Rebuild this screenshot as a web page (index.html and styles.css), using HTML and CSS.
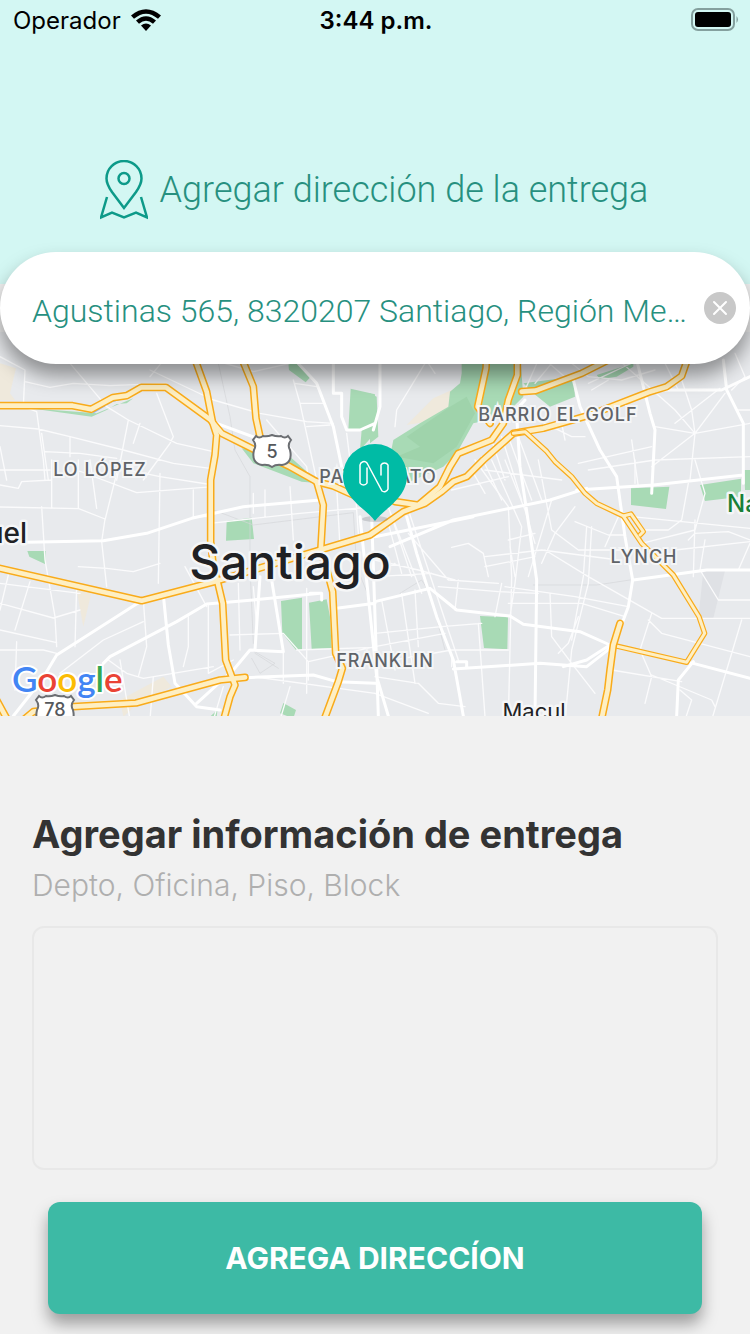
FILE: index.html
```html
<!DOCTYPE html>
<html lang="es">
<head>
<meta charset="utf-8">
<meta name="viewport" content="width=device-width, initial-scale=1">
<title>Agregar dirección</title>
<link rel="stylesheet" href="styles.css">
</head>
<body>
<header class="header">
  <div class="status">
    <div class="carrier">
      <span>Operador</span>
      <svg class="wifi" viewBox="0 0 30 22" aria-hidden="true">
        <path d="M0 6.500Q15-6.200 30 6.500L27 9.800Q15-.5 3 9.800Z"/>
        <path d="M5 11.500Q15 3 25 11.500L22 14.700Q15 9 8 14.700Z"/>
        <path d="M10 16.500Q15 12.500 20 16.500L15 22Z"/>
      </svg>
    </div>
    <time class="clock">3:44 p.m.</time>
    <svg class="battery" viewBox="0 0 48 24" aria-hidden="true">
      <rect x="1" y="1" width="42" height="21" rx="6" fill="none" stroke="#84a09e" stroke-width="2"/>
      <rect x="4" y="4" width="36" height="15" rx="3"/>
      <path d="M45.500 8q3 3.500 0 7z" fill="#84a09e"/>
    </svg>
  </div>
  <div class="title">
    <svg class="title-icon" viewBox="0 0 48 60" aria-hidden="true">
      <path d="M24 48L12 32C8.500 27 6.500 23 6.500 18.500a17.500 17.500 0 0 1 35 0C41.500 23 39.500 27 36 32Z"/>
      <circle cx="24" cy="18.500" r="5.500"/>
      <path d="M7 37L1 57.500L12 52.700L24 57.500L36 52.700L47 57.500L41 37"/>
    </svg>
    <h1>Agregar dirección de la entrega</h1>
  </div>
</header>
<main>
  <form class="search" role="search">
    <input class="search-input" type="text" aria-label="Dirección" value="Agustinas 565, 8320207 Santiago, Región Metropolitana, Chile">
    <button class="clear" type="button" aria-label="Borrar">
      <svg viewBox="0 0 32 32" aria-hidden="true"><path d="M10 10L22 22M22 10L10 22"/></svg>
    </button>
  </form>
  <section class="map" aria-label="Mapa de Santiago">
    <svg class="map-canvas" viewBox="0 332 750 384" preserveAspectRatio="xMidYMid slice">
      <defs>
        <g id="highways">
          <g transform="translate(0 720)">
            <path d="M-10 497L218 497L273 508L338 473L380 467L424 442L498 442L630 538L665 580L765 630L870 680L950 725L1000 738L1060 765"/>
            <path d="M575 330L620 455L638 548L650 585L645 645L632 720L632 905L640 980L655 1035L668 1090L677 1260L705 1335L690 1370L668 1450"/>
            <path d="M715 330L760 440L768 535L780 590L785 630"/>
            <path d="M950 725L970 795L962 935L975 970L998 1055L1007 1240L1027 1285L1015 1325L972 1440"/>
          </g>
          <g transform="translate(0 1380)">
            <path d="M-10 323L425 422L640 366L1110 225L1210 155L1275 130L1325 95L1360 65L1400 50L1450 0L1540 -80L1630 -95L1770 -135L1945 -203L2000 -220L2045 -252L2065 -310"/>
            <path d="M-10 720L20 775M70 780L100 755L220 740L408 729L660 660L735 652"/>
          </g>
          <g transform="translate(1125 720)">
            <path d="M335 340L333 385L308 500L345 550"/>
            <path d="M427 350L427 405L400 480L385 550L350 600L250 640L225 680L195 740L130 795L60 785"/>
            <path d="M440 455L482 452L620 400L720 350"/>
          </g>
        </g>
        <g id="arterials" transform="translate(1125 720)">
          <path d="M415 580L450 575L515 634L540 665L590 710L630 760L665 790L745 828L800 910L895 1005L972 1130L989 1180L935 1267L720 1217"/>
          <path d="M745 828L768 822L805 875L795 885"/>
        </g>
        <path id="avenue" transform="translate(1125 1380)" d="M735 490L715 555L705 630L698 690L675 800"/>
      </defs>
      <rect y="332" width="750" height="384" fill="#e8eaed"/>
      <g transform="scale(.3333333)">
        <g fill="#efe9dc">
          <path d="M0 1090L48 1105L30 1180L45 1200L0 1200ZM230 1770L276 1770L250 1880ZM360 2100L490 2030L515 2060L420 2105L370 2150Z"/>
          <path d="M1380 1085L1400 1070L1395 1120ZM1220 1275L1300 1195L1400 1150L1345 1240L1280 1265Z"/>
        </g>
        <g fill="#a8dab5">
          <path d="M865 1090L900 1090L932 1130L917 1147L867 1110ZM1052 1166L1125 1183V1300L1080 1350L1085 1290H1045ZM725 1345L800 1360L870 1370L960 1450L905 1445L760 1390Z"/>
          <path d="M1385 1060V1120L1380 1150L1350 1175L1345 1220L1260 1270L1180 1320L1170 1370L1220 1450L1330 1400L1370 1360L1420 1270L1510 1250L1570 1190L1560 1060ZM1570 1150L1720 1130L1725 1190L1650 1220L1600 1180ZM1790 1125L1900 1090V1100L1850 1130L1800 1137ZM1110 1180L1130 1190L1135 1310L1110 1330Z"/>
          <path d="M680 1563L755 1553L762 1617L678 1622ZM82 1653H137L135 1692L88 1670ZM843 1803L906 1793V1950H888L847 1900ZM927 1808L980 1798L990 1850L995 1945L935 1947ZM850 2109L888 2130L880 2155L840 2140ZM630 2150L652 2130L650 2160ZM90 1225L290 1240L400 1195L380 1210L350 1212L320 1230L275 1250Z"/>
          <path d="M1893 1465L2008 1460L1998 1527L1893 1515ZM2100 1455L2223 1436V1490L2115 1503ZM1440 1848L1524 1852L1522 1948L1452 1944ZM2233 1410H2250V1470H2235Z"/>
        </g>
        <g fill="#9fd3ab">
          <path d="M1350 1220L1400 1190L1425 1240L1370 1340L1300 1390L1190 1370L1260 1340L1220 1310Z"/>
        </g>
        <path d="M280 1238L335 1205L395 1188" fill="none" stroke="#8ab4f8" stroke-width="4"/>
        <path d="M2110 1712H2175L2140 1855H2095Z" fill="#dfe1e5"/>
        <g class="rail">
          <path d="M655 1090L690 1250L705 1350L750 1430V1700L760 1930M640 1530L760 1575L1060 1538L1070 1700L1110 1800M1200 1780L1265 1740L1290 1780L1335 1950M1600 1755H1790L1890 1740"/>
          <path d="M755 1950L825 1990L780 2020L755 1975M765 1960L835 2005"/>
        </g>
        <g class="minor">
          <g transform="translate(0 720)">
            <path d="M0 350L75 390L70 500L110 515L130 660L135 720M75 425L150 442L220 430L330 437L500 430M210 370L320 500L385 540L530 610L640 635M450 390L640 480L780 520L920 545L1000 550M470 460L520 590L510 610L430 720M0 557L115 567L210 590L370 630L520 670L630 685M385 540L350 720M420 550L400 610M125 580L145 720M210 590V650M135 635L240 640L350 655M0 620L20 720M0 690H150M500 350L450 410M880 420L900 490L950 720M900 490H970M920 560L990 555M885 430L950 440M640 360L760 395L870 370"/>
            <path d="M800 540L920 680L925 720M760 760V820M795 750V830M630 850L900 820L1125 800M870 740L880 900M1010 740L1020 920M580 750L580 830H640M1065 740L1075 880M1040 580L1060 740"/>
          </g>
          <g transform="translate(0 1380)">
            <path d="M0 75L55 85L65 65L155 60M0 141L236 146L315 177L305 245L320 380M155 0V145M235 0V145M125 140L135 300L165 470L170 560M360 0L315 180M230 30L410 98L640 80M360 25L480 50L640 75M480 40L475 370M235 320L320 325L400 335L480 310M230 375L225 560M0 430L160 474L240 450M25 345L0 450M90 365L45 510M0 370L240 400M0 510L170 548M50 545L45 690M0 570H130L170 580M430 420L440 560L415 650M430 485L310 540L180 640M565 470V560L550 620M625 435V640L700 600M325 600L380 640L430 655L640 620M690 525L850 520L925 605L1125 560M715 370L720 570M760 380L770 500M920 385V700M850 570V670M890 570L1125 562M760 650L1125 700M925 605V660M670 680L640 780M870 680L840 780M460 650L450 780M360 600L390 780M270 0L290 145M555 320L620 440"/>
          </g>
          <g transform="translate(1125 720)">
            <path d="M150 370L65 510L60 560M140 340L180 400M490 360L450 450M530 370L480 430M590 370L640 410L740 420L840 390M790 360L640 430M720 350L900 510L960 580M920 420L950 510L960 580L945 720M1050 460L960 580L830 680M960 580L840 560M960 580L1125 550M1035 445L900 550M560 550L570 600M470 530L590 590L630 590M610 670L830 620M640 690L840 660L1125 650M770 600L790 740M1080 340L1110 410L1070 450M1125 510H1085M860 350L910 450M380 590L440 780M400 590L470 780M430 590L500 780M350 600L390 720M320 650L380 780M290 690L330 760M230 750L400 710M500 350L580 420M650 450L700 420"/>
          </g>
          <g transform="translate(1125 1380)">
            <path d="M330 30L560 60M300 0L400 140L410 350L400 780M350 0L440 200L420 370L405 470M390 0L450 150L480 250M490 0L530 210L610 270H740M530 120L460 350M600 140L540 220L500 310M600 185L700 225H750M635 200L625 350L590 540M650 200L640 370L590 570L570 780M330 290L500 270L730 300M330 320L480 290M230 262L280 250L325 280L340 350M480 220L400 240M510 270L640 350L860 475H1125M390 380L600 410L760 440M400 430H620L750 470M525 400L530 530L590 610L660 700M610 470L580 550L550 580M830 460L795 570L830 650L810 730M820 480L860 520L1125 590M1100 480L1010 780M710 630L920 665M830 645L1010 720L1020 740M915 690L950 720L930 780M990 240L975 330L1030 420H1125M1125 240L1060 215L960 220L940 240M960 180L955 350M770 170L1125 205M940 70L920 180L880 210H810M960 0L990 100L960 210L800 250M900 270L1125 245M1125 250L1090 330M780 0V70M100 220L220 360L370 370M0 300L130 330L240 360M0 350L170 340M190 380L370 395L490 400M0 520L200 500L320 490M20 420L60 630M80 400L120 670M120 390L130 560M0 560L210 520M0 610L230 570L400 570M230 590V620M0 650L130 670L190 730L270 740M0 700L160 760M310 490L330 770M0 20L110 350M20 90L140 400M100 150L250 600M40 190L80 340M60 310L0 340M250 360L240 450M380 370L360 470M730 170L690 260M405 260L420 350"/>
          </g>
        </g>
        <g class="major">
          <path d="M1000 1090V1180H1025V1250L1040 1290H1080L1125 1270M885 1080L950 1150L1000 1280L1025 1400M650 1270L780 1318M1140 1080V1220L1120 1290"/>
          <path d="M80 1627L310 1622L440 1600L575 1555L730 1520L960 1500M420 1805L170 1965L125 2040L40 2148M310 1990L330 1970L530 1865L620 1812L780 1798L960 1780M490 1785L505 1935L525 2050L590 2120L660 2130M780 1730L765 1950M815 1740L850 1955L750 1950L700 2010L590 2110M930 1780H965V1800M740 2033L940 2025L1010 2045L1125 2050M1010 1825L1125 1810M1080 1550L1130 2030L1165 2148M1115 1550L1135 2148"/>
          <path d="M1575 1200L1530 1250M1720 1140L1740 1220L1800 1350L1850 1430L1875 1610L1898 1740L1885 1820L1855 1900M1940 1170H2165L2250 1130M1910 1080L1950 1240L1965 1290L1955 1480M2170 1080L2180 1170L2190 1190L2230 1270V1450M1730 1470L1960 1455L2230 1425"/>
          <path d="M1550 1250L1560 1400L1590 1600L1610 1740L1605 2148M1170 1640L1360 1560L1650 1500L1760 1465M1125 1610L1420 1550M1125 1805L1290 1765L1370 1830L1530 1848L1570 1873L1740 1895L1830 1935M1220 1550L1250 1660L1310 1850L1360 1980L1390 2148M1360 2007L1620 1990L1760 2000L1830 1945M1370 1985H1400V2005M1830 1935L1760 1980L1690 2000M2080 1985L2035 2040L2030 2148M2060 1985L2250 2035M1900 1740L2120 1710H2250"/>
        </g>
        <use href="#highways" class="road-edge"/>
        <use href="#highways" class="road-fill"/>
        <use href="#arterials" class="arterial-edge"/>
        <use href="#arterials" class="arterial-fill"/>
        <use href="#avenue" class="road-edge"/>
        <use href="#avenue" class="road-fill"/>
      </g>
      <g class="shields">
        <path d="M256 436q3 3 7 0q4 1 9-1q5 2 9 1q4 3 7 0l3 4q-4 5-1 10q3 13-8 15q-6-1-10 2q-4-3-10-2q-11-2-8-15q3-5-1-10Z"/>
        <text x="272" y="458">5</text>
        <path d="M39 696q3 3 7 0q4 1 9-1q5 2 9 1q4 3 7 0l3 4q-4 5-1 10q3 13-8 15q-6-1-10 2q-4-3-10-2q-11-2-8-15q3-5-1-10Z"/>
        <text x="55" y="716">78</text>
      </g>
      <g class="area-labels">
        <text x="100" y="476">LO LÓPEZ</text>
        <text x="558" y="421">BARRIO EL GOLF</text>
        <text x="378" y="483">PATRONATO</text>
        <text x="644" y="563">LYNCH</text>
        <text x="385" y="667">FRANKLIN</text>
      </g>
      <g class="town-labels">
        <text class="city" x="290" y="579">Santiago</text>
        <text class="town" x="27" y="543" text-anchor="end">uel</text>
        <text class="suburb" x="534" y="719">Macul</text>
        <text class="park" x="727" y="512" text-anchor="start">Na</text>
      </g>
      <g class="google">
        <text x="12" y="692"><tspan fill="#4285f4">G</tspan><tspan fill="#ea4335">o</tspan><tspan fill="#fbbc04">o</tspan><tspan fill="#4285f4">g</tspan><tspan fill="#34a853">l</tspan><tspan fill="#ea4335">e</tspan></text>
      </g>
      <ellipse cx="375" cy="519" rx="13" ry="3" fill="#8d9094" opacity=".35"/>
      <path d="M375 521C366 509 343 498 343 476a32 32 0 0 1 64 0C407 498 384 509 375 521Z" fill="#00bba5"/>
      <path d="M367 468V483a4 4 0 0 1-7 0V465a4 4 0 0 1 7-2L382 491a4 4 0 0 0 6-2V465a4 4 0 0 0-7 0V475" fill="none" stroke="#fff" stroke-width="1.500" stroke-linecap="round" stroke-linejoin="round"/>
    </svg>
  </section>
  <form class="details">
    <h2><label for="info">Agregar información de entrega</label></h2>
    <p class="hint" id="hint">Depto, Oficina, Piso, Block</p>
    <textarea class="info" id="info" aria-describedby="hint"></textarea>
    <button class="submit" type="button">AGREGA DIRECCÍON</button>
  </form>
</main>
</body>
</html>
```
FILE: styles.css
```css
* {
  box-sizing: border-box;
}

body {
  margin: 0;
  background: #f1f1f1;
  font-family: Roboto, "Liberation Sans", sans-serif;
}

.header {
  padding-bottom: 64px;
  background: #d3f7f3;
}

.status {
  display: grid;
  grid-template-columns: 1fr auto 1fr;
  align-items: center;
  height: 40px;
  padding: 0 11px 0 13px;
  font-family: Inter, sans-serif;
  font-size: 24px;
}

.carrier {
  display: flex;
  align-items: center;
  gap: 10px;
}

.wifi {
  width: 30px;
  height: 22px;
}

.clock {
  font-weight: 600;
}

.battery {
  justify-self: end;
  width: 48px;
  height: 24px;
}

.title {
  display: flex;
  justify-content: center;
  align-items: center;
  gap: 12px;
  margin-top: 120px;
  padding-right: 2px;
}

.title-icon {
  flex: none;
  width: 48px;
  height: 60px;
  fill: none;
  stroke: #0d9a89;
  stroke-width: 2.5;
}

.title h1 {
  margin: 0;
  color: #27907f;
  font-size: 36px;
  font-weight: 300;
  line-height: 56px;
}

.search {
  position: relative;
  display: flex;
  align-items: center;
  gap: 16px;
  height: 112px;
  margin-top: -32px;
  padding: 0 14px 0 32px;
  border-radius: 56px;
  background: #fff;
  box-shadow: 0 12px 20px rgba(0, 0, 0, .4);
}

.search-input {
  flex: 1;
  min-width: 0;
  height: 64px;
  margin-top: 6px;
  padding: 0;
  border: 0;
  outline: 0;
  background: transparent;
  color: #27907f;
  font-family: inherit;
  font-size: 32px;
  font-weight: 300;
  text-overflow: ellipsis;
}

.clear {
  flex: none;
  width: 32px;
  height: 32px;
  padding: 0;
  border: 0;
  border-radius: 50%;
  background: #c8c8c8;
}

.clear svg {
  display: block;
  fill: none;
  stroke: #fff;
  stroke-width: 2;
  stroke-linecap: round;
}

.map {
  height: 384px;
  margin-top: -32px;
}

.map-canvas {
  display: block;
  width: 100%;
  height: 100%;
  font-family: Inter, sans-serif;
}

.minor,
.major,
.rail,
.road-edge,
.road-fill,
.arterial-edge,
.arterial-fill {
  fill: none;
  stroke-linejoin: round;
  stroke-linecap: round;
}

.minor {
  stroke: #fbfbfc;
  stroke-width: 4;
}

.major {
  stroke: #fff;
  stroke-width: 9;
}

.rail {
  stroke: #d5d7da;
  stroke-width: 2;
}

.road-edge {
  stroke: #f9ab1a;
  stroke-width: 23;
}

.road-fill {
  stroke: #feefc3;
  stroke-width: 14;
}

.arterial-edge {
  stroke: #f9ab1a;
  stroke-width: 16;
}

.arterial-fill {
  stroke: #feefc3;
  stroke-width: 9;
}

.shields path {
  fill: #fff;
  stroke: #6b6e72;
  stroke-width: 2;
}

.shields text {
  fill: #55585c;
  font-size: 18px;
  font-weight: 500;
  text-anchor: middle;
}

.area-labels text {
  fill: #5f6368;
  stroke: #f5f6f7;
  stroke-width: 4;
  paint-order: stroke;
  font-size: 18px;
  font-weight: 500;
  letter-spacing: 1px;
  text-anchor: middle;
}

.town-labels text {
  fill: #202124;
  stroke: #f5f6f7;
  stroke-width: 5;
  stroke-linejoin: round;
  paint-order: stroke;
}

.town-labels .city {
  font-size: 48px;
  font-weight: 500;
  text-anchor: middle;
}

.town-labels .town {
  font-size: 28px;
  font-weight: 500;
}

.town-labels .suburb {
  font-size: 22px;
  text-anchor: middle;
}

.town-labels .park {
  fill: #188038;
  font-size: 24px;
  font-weight: 500;
}

.google text {
  stroke: #fff;
  stroke-width: 4;
  stroke-linejoin: round;
  paint-order: stroke;
  font-family: Lato, sans-serif;
  font-size: 35px;
  font-weight: 600;
}

.details {
  display: flex;
  flex-direction: column;
  padding: 96px 32px 20px;
  font-family: Inter, sans-serif;
}

.details h2 {
  margin: 0;
  color: #333;
  font-size: 38px;
  font-weight: 700;
  line-height: 44px;
}

.hint {
  margin: 12px 0 24px;
  color: #afafaf;
  font-size: 30px;
  font-weight: 300;
  line-height: 34px;
}

.info {
  height: 244px;
  padding: 16px;
  border: 2px solid #e8e8e8;
  border-radius: 12px;
  outline: 0;
  background: transparent;
  font: inherit;
  font-size: 28px;
  resize: none;
}

.submit {
  height: 112px;
  margin: 32px 16px 0;
  border: 0;
  border-radius: 12px;
  background: #3dbaa5;
  box-shadow: 0 10px 16px rgba(0, 0, 0, .35);
  color: #fff;
  font-family: inherit;
  font-size: 30px;
  font-weight: 700;
}
```
